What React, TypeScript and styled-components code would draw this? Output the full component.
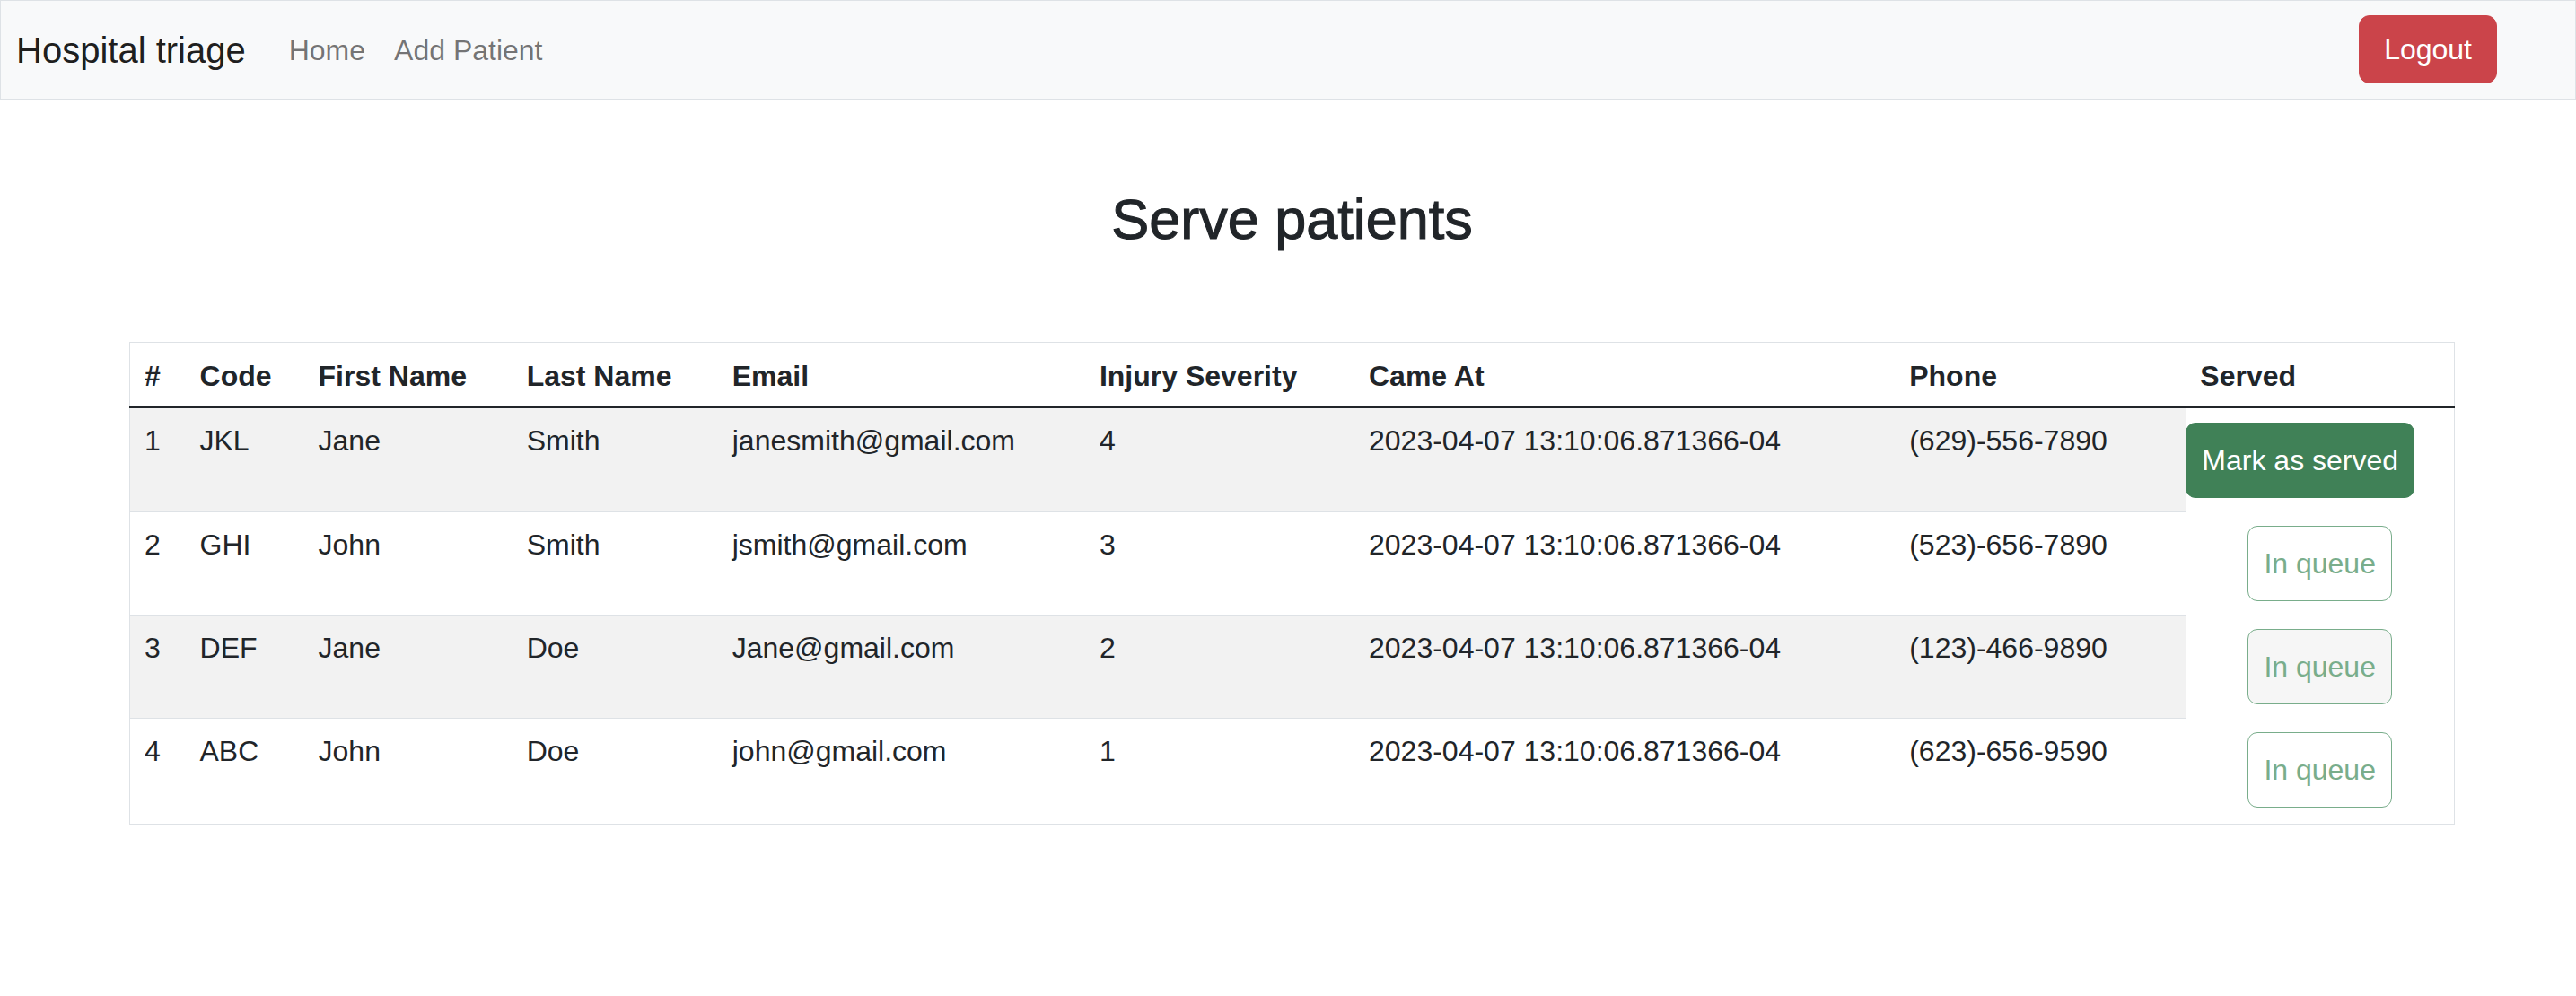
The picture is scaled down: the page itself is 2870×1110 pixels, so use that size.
import React from "react";
import styled, { createGlobalStyle } from "styled-components";

const GlobalStyle = createGlobalStyle`
  html, body {
    margin: 0;
    padding: 0;
    background: #ffffff;
  }
  body {
    font-family: "Liberation Sans", Arial, sans-serif;
    color: #212529;
    -webkit-font-smoothing: antialiased;
  }
  *, *::before, *::after {
    box-sizing: border-box;
  }
`;

const NavBar = styled.nav`
  display: flex;
  align-items: center;
  height: 111px;
  padding: 0 87px 0 17px;
  background: #f8f9fa;
  border: 1px solid #dee2e6;
`;

const Brand = styled.a`
  font-size: 40px;
  line-height: 60px;
  color: rgba(0, 0, 0, 0.9);
  text-decoration: none;
  margin-right: 32px;
  white-space: nowrap;
`;

const NavLinks = styled.div`
  display: flex;
  align-items: center;
`;

const NavLink = styled.a`
  font-size: 32px;
  line-height: 48px;
  padding: 0 16px;
  color: rgba(0, 0, 0, 0.55);
  text-decoration: none;
  white-space: nowrap;
`;

const LogoutButton = styled.button`
  margin-left: auto;
  margin-top: -2px;
  font-family: inherit;
  font-size: 32px;
  line-height: 48px;
  padding: 13px 27px;
  color: #ffffff;
  background: #cb444a;
  border: 1px solid #cb444a;
  border-radius: 12px;
  cursor: pointer;
`;

const Main = styled.main`
  padding: 95px 135px 0 144px;
`;

const Title = styled.h2`
  margin: 0 0 99px;
  text-align: center;
  font-size: 63px;
  line-height: 76px;
  font-weight: 500;
  color: #212529;
  -webkit-text-stroke: 1.1px #212529;
`;

const Table = styled.table`
  width: 100%;
  border-collapse: collapse;
  table-layout: fixed;
  border: 1px solid #dee2e6;
  font-size: 32px;
  color: #212529;
`;

const HeadCell = styled.th`
  text-align: left;
  font-weight: 700;
  padding: 17px 16px 14px;
  line-height: 40px;
  border-bottom: 2px solid #212529;
  vertical-align: bottom;
  white-space: nowrap;
`;

const Cell = styled.td<{ $striped: boolean }>`
  padding: 16px;
  line-height: 40px;
  vertical-align: top;
  border-bottom: 1px solid #dee2e6;
  background: ${(p) => (p.$striped ? "#f2f2f2" : "transparent")};
  white-space: nowrap;
`;

const ServedCell = styled.td<{ $align: "left" | "center" }>`
  padding: 16px 0 15px;
  vertical-align: top;
  text-align: ${(p) => p.$align};
  border-bottom: none;

  tr:last-child > & {
    padding-bottom: 18px;
  }
`;

const ActionButton = styled.button<{ $variant: "solid" | "outline"; $tinted?: boolean }>`
  display: inline-block;
  vertical-align: top;
  font-family: inherit;
  font-size: 32px;
  line-height: 48px;
  padding: 17px;
  border-radius: 11px;
  white-space: nowrap;
  border: 1px solid ${(p) => (p.$variant === "solid" ? "#408157" : "#79ad8b")};
  color: ${(p) => (p.$variant === "solid" ? "#ffffff" : "#79ad8b")};
  background: ${(p) =>
    p.$variant === "solid" ? "#408157" : p.$tinted ? "#f6f6f6" : "#ffffff"};
  cursor: ${(p) => (p.$variant === "solid" ? "pointer" : "default")};
`;

type Patient = {
  id: number;
  code: string;
  first: string;
  last: string;
  email: string;
  severity: number;
  cameAt: string;
  phone: string;
};

const patients: Patient[] = [
  { id: 1, code: "JKL", first: "Jane", last: "Smith", email: "janesmith@gmail.com", severity: 4, cameAt: "2023-04-07 13:10:06.871366-04", phone: "(629)-556-7890" },
  { id: 2, code: "GHI", first: "John", last: "Smith", email: "jsmith@gmail.com", severity: 3, cameAt: "2023-04-07 13:10:06.871366-04", phone: "(523)-656-7890" },
  { id: 3, code: "DEF", first: "Jane", last: "Doe", email: "Jane@gmail.com", severity: 2, cameAt: "2023-04-07 13:10:06.871366-04", phone: "(123)-466-9890" },
  { id: 4, code: "ABC", first: "John", last: "Doe", email: "john@gmail.com", severity: 1, cameAt: "2023-04-07 13:10:06.871366-04", phone: "(623)-656-9590" },
];

const columns = [
  { label: "#", width: 62 },
  { label: "Code", width: 132 },
  { label: "First Name", width: 232 },
  { label: "Last Name", width: 229 },
  { label: "Email", width: 409 },
  { label: "Injury Severity", width: 300 },
  { label: "Came At", width: 602 },
  { label: "Phone", width: 324 },
  { label: "Served", width: 299 },
];

export default function App() {
  return (
    <>
      <GlobalStyle />
      <NavBar>
        <Brand href="#">Hospital triage</Brand>
        <NavLinks>
          <NavLink href="#">Home</NavLink>
          <NavLink href="#">Add Patient</NavLink>
        </NavLinks>
        <LogoutButton type="button">Logout</LogoutButton>
      </NavBar>
      <Main>
        <Title>Serve patients</Title>
        <Table>
          <colgroup>
            {columns.map((c) => (
              <col key={c.label} style={{ width: c.width }} />
            ))}
          </colgroup>
          <thead>
            <tr>
              {columns.map((c) => (
                <HeadCell key={c.label}>{c.label}</HeadCell>
              ))}
            </tr>
          </thead>
          <tbody>
            {patients.map((p, i) => {
              const striped = i % 2 === 0;
              const first = i === 0;
              return (
                <tr key={p.id}>
                  <Cell $striped={striped}>{p.id}</Cell>
                  <Cell $striped={striped}>{p.code}</Cell>
                  <Cell $striped={striped}>{p.first}</Cell>
                  <Cell $striped={striped}>{p.last}</Cell>
                  <Cell $striped={striped}>{p.email}</Cell>
                  <Cell $striped={striped}>{p.severity}</Cell>
                  <Cell $striped={striped}>{p.cameAt}</Cell>
                  <Cell $striped={striped}>{p.phone}</Cell>
                  <ServedCell $align={first ? "left" : "center"}>
                    {first ? (
                      <ActionButton $variant="solid" type="button">
                        Mark as served
                      </ActionButton>
                    ) : (
                      <ActionButton $variant="outline" $tinted={striped} type="button" disabled>
                        In queue
                      </ActionButton>
                    )}
                  </ServedCell>
                </tr>
              );
            })}
          </tbody>
        </Table>
      </Main>
    </>
  );
}
